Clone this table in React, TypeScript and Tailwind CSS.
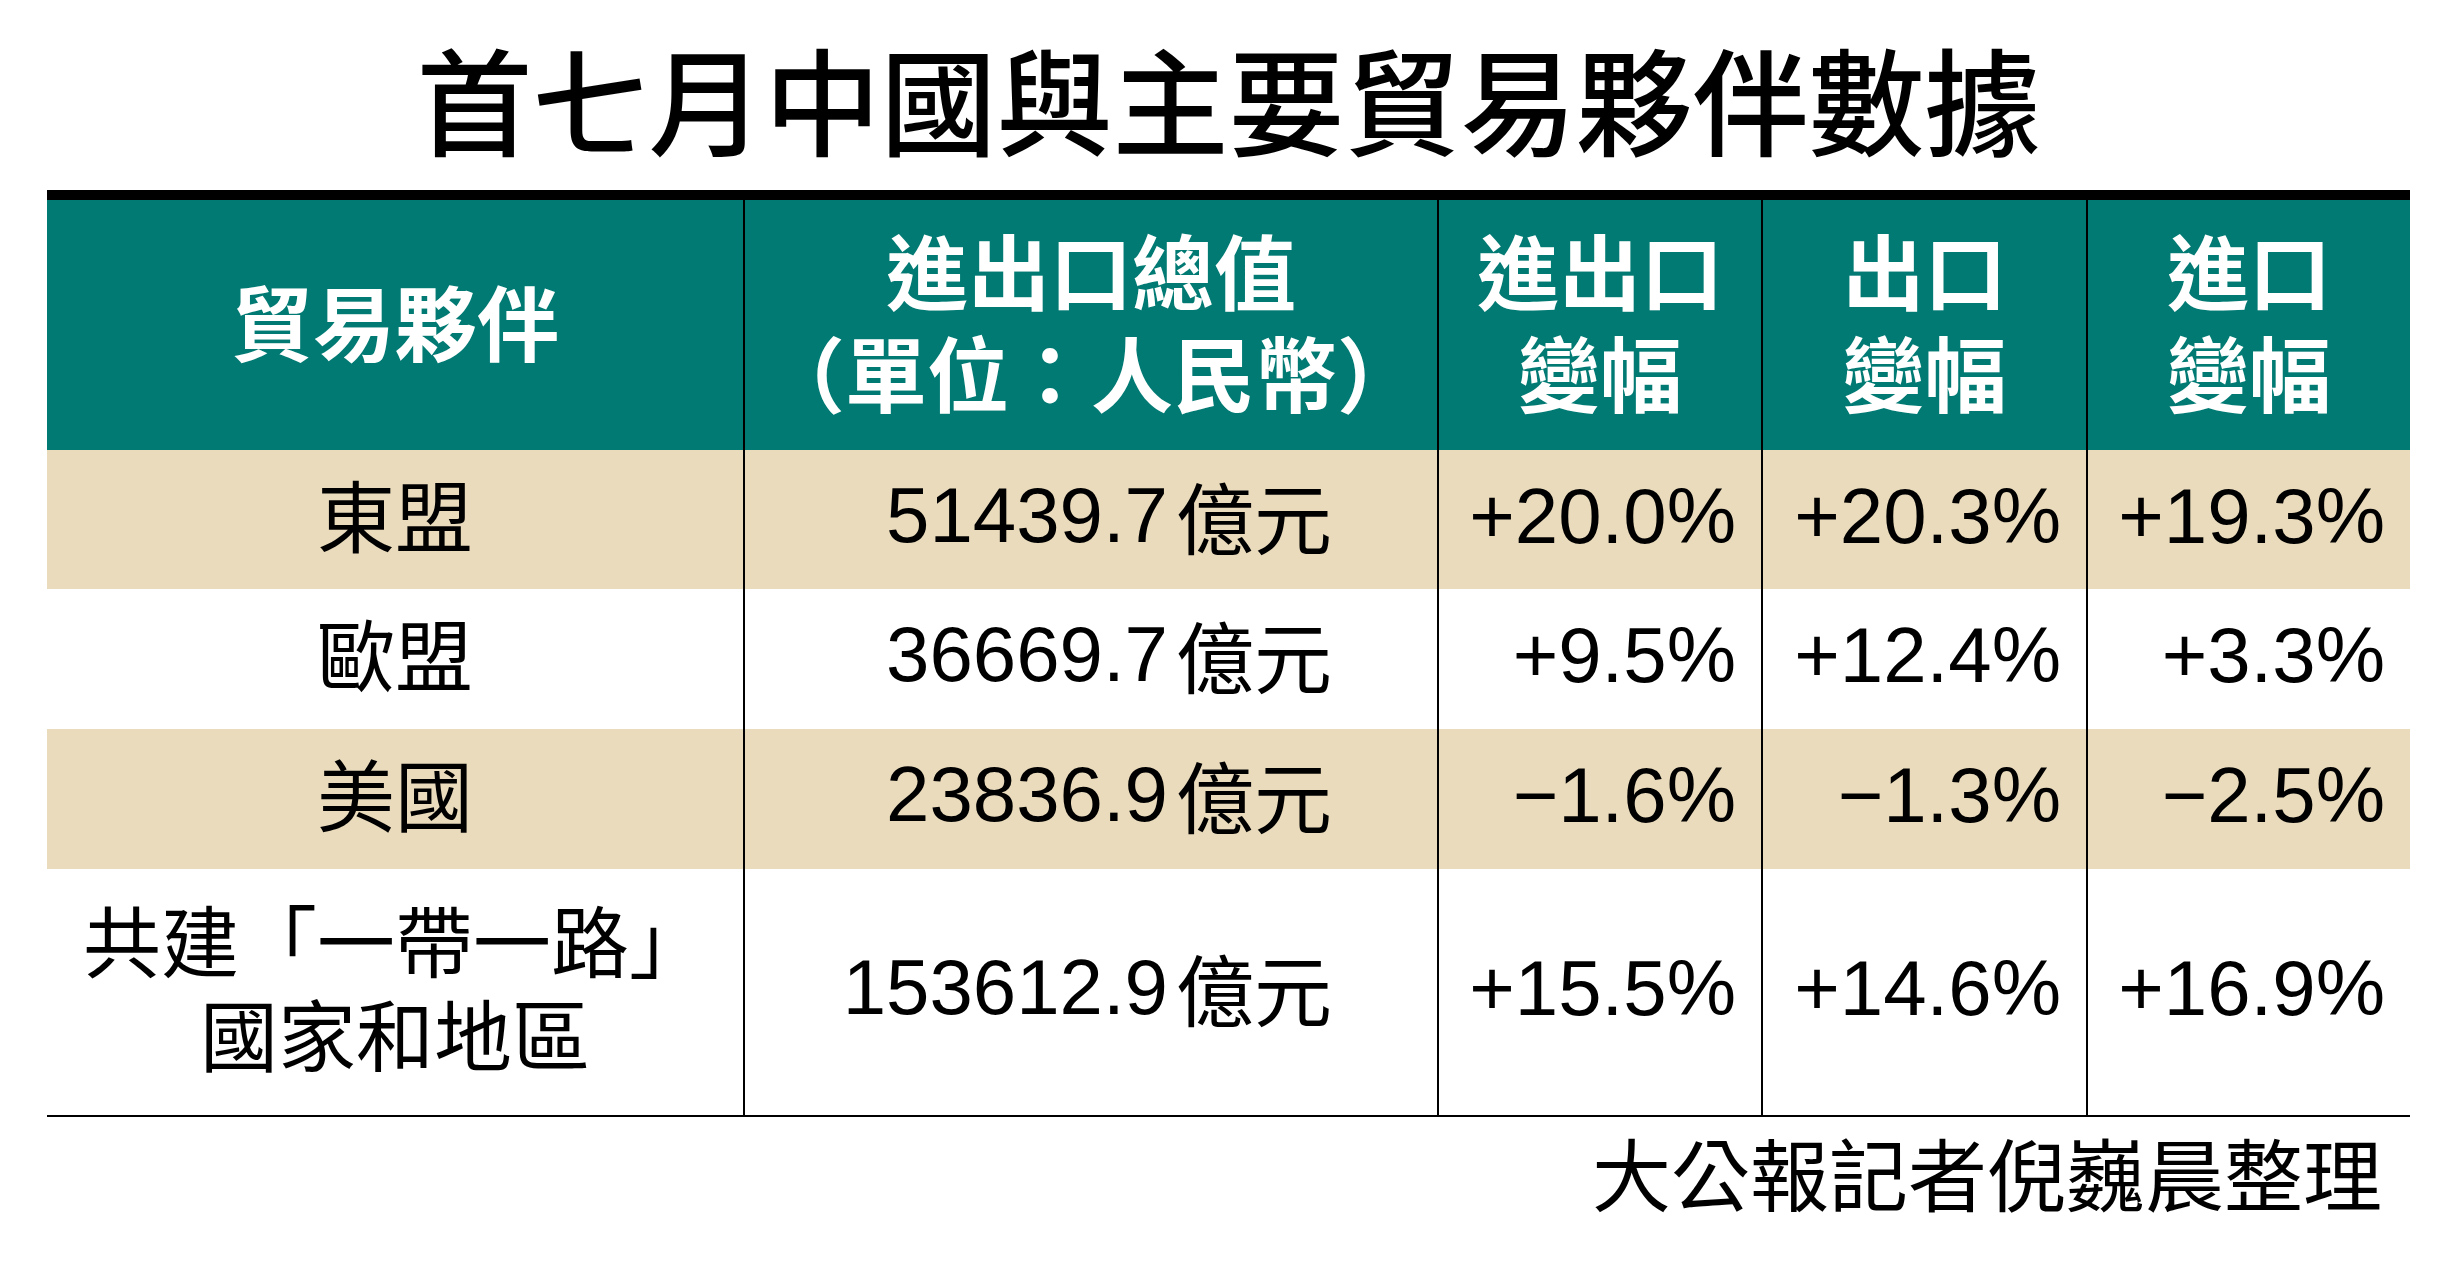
import React from 'react';

const CJK = "font-['Noto_Sans_CJK_TC','Noto_Sans_CJK_SC',sans-serif]";
const NUM = "font-['Liberation_Sans','Noto_Sans_CJK_TC',sans-serif]";

type Row = {
  partner: string[];
  total: string;
  all: string;
  exp: string;
  imp: string;
  bg: string;
  h: string;
};

const rows: Row[] = [
  { partner: ['東盟'], total: '51439.7', all: '+20.0%', exp: '+20.3%', imp: '+19.3%', bg: 'bg-[#eadbbc]', h: 'h-[139px]' },
  { partner: ['歐盟'], total: '36669.7', all: '+9.5%', exp: '+12.4%', imp: '+3.3%', bg: 'bg-white', h: 'h-[140px]' },
  { partner: ['美國'], total: '23836.9', all: '−1.6%', exp: '−1.3%', imp: '−2.5%', bg: 'bg-[#eadbbc]', h: 'h-[140px]' },
  {
    partner: ['共建「一帶一路」', '國家和地區'],
    total: '153612.9',
    all: '+15.5%',
    exp: '+14.6%',
    imp: '+16.9%',
    bg: 'bg-white',
    h: 'h-[246px]',
  },
];

const cols = 'grid grid-cols-[696px_694px_324px_325px_324px]';

const HeadCell: React.FC<{ lines: string[]; first?: boolean }> = ({ lines, first }) => (
  <div
    className={`flex flex-col items-center justify-center pb-[10px] text-white font-bold text-[82px] leading-[102px] ${CJK} ${
      first ? '' : 'border-l-2 border-black'
    }`}
  >
    {lines.map((l) => (
      <span key={l} className="whitespace-nowrap">
        {l}
      </span>
    ))}
  </div>
);

export default function App() {
  return (
    <div className="w-[2457px] h-[1267px] bg-white text-black overflow-hidden">
      {/* title */}
      <div className="h-[190px] pt-[38px]">
        <h1 className={`text-center text-[116px] leading-none font-medium ${CJK}`}>
          首七月中國與主要貿易夥伴數據
        </h1>
      </div>

      <div className="ml-[47px] w-[2363px]">
        <div className="h-[10px] bg-black" />

        {/* header */}
        <div className={`${cols} h-[250px] bg-[#007a73]`}>
          <HeadCell first lines={['貿易夥伴']} />
          <HeadCell lines={['進出口總值', '（單位：人民幣）']} />
          <HeadCell lines={['進出口', '變幅']} />
          <HeadCell lines={['出口', '變幅']} />
          <HeadCell lines={['進口', '變幅']} />
        </div>

        {rows.map((r) => (
          <div key={r.total} className={`${cols} ${r.h} ${r.bg}`}>
            <div className={`flex flex-col items-center justify-center pb-[14px] text-[78px] leading-[94px] ${CJK}`}>
              {r.partner.map((p) => (
                <span key={p} className="whitespace-nowrap">
                  {p}
                </span>
              ))}
            </div>
            <div className={`flex items-center justify-end pb-[10px] pr-[105px] border-l-2 border-black text-[78px] leading-none ${NUM}`}>
              <span>{r.total}</span>
              <span className={`ml-[8px] ${CJK}`}>億元</span>
            </div>
            {[r.all, r.exp, r.imp].map((v, i) => (
              <div
                key={i}
                className={`flex items-center justify-end pb-[8px] pr-[25px] border-l-2 border-black text-[78px] leading-none ${NUM}`}
              >
                {v}
              </div>
            ))}
          </div>
        ))}

        <div className="h-[2px] bg-black" />

        <div className={`mt-[15px] pr-[28px] text-right text-[79px] leading-none ${CJK}`}>
          大公報記者倪巍晨整理
        </div>
      </div>
    </div>
  );
}
